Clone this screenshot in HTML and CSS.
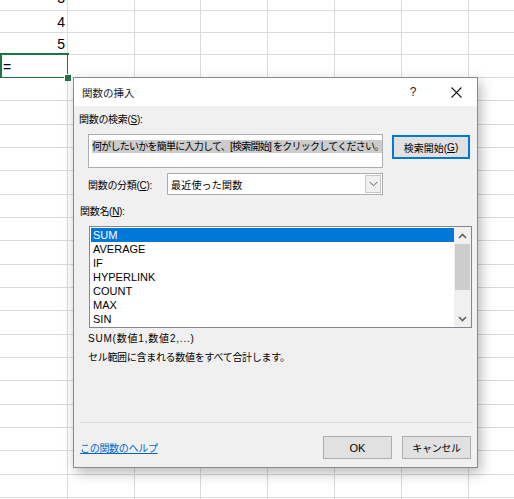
FILE: index.html
```html
<!DOCTYPE html>
<html lang="ja">
<head>
<meta charset="utf-8">
<title>関数の挿入</title>
<link rel="stylesheet" href="styles.css">
</head>
<body>
<div class="sheet">
  <div class="num num-top">3</div><div></div><div></div><div></div><div></div><div></div><div></div><div></div>
  <div class="num">4</div><div></div><div></div><div></div><div></div><div></div><div></div><div></div>
  <div class="num">5</div><div></div><div></div><div></div><div></div><div></div><div></div><div></div>
  <div class="active">=</div><div></div><div></div><div></div><div></div><div></div><div></div><div></div>
  <div></div><div></div><div></div><div></div><div></div><div></div><div></div><div></div>
  <div></div><div></div><div></div><div></div><div></div><div></div><div></div><div></div>
  <div></div><div></div><div></div><div></div><div></div><div></div><div></div><div></div>
  <div></div><div></div><div></div><div></div><div></div><div></div><div></div><div></div>
  <div></div><div></div><div></div><div></div><div></div><div></div><div></div><div></div>
  <div></div><div></div><div></div><div></div><div></div><div></div><div></div><div></div>
  <div></div><div></div><div></div><div></div><div></div><div></div><div></div><div></div>
  <div></div><div></div><div></div><div></div><div></div><div></div><div></div><div></div>
  <div></div><div></div><div></div><div></div><div></div><div></div><div></div><div></div>
  <div></div><div></div><div></div><div></div><div></div><div></div><div></div><div></div>
  <div></div><div></div><div></div><div></div><div></div><div></div><div></div><div></div>
  <div></div><div></div><div></div><div></div><div></div><div></div><div></div><div></div>
  <div></div><div></div><div></div><div></div><div></div><div></div><div></div><div></div>
  <div></div><div></div><div></div><div></div><div></div><div></div><div></div><div></div>
  <div></div><div></div><div></div><div></div><div></div><div></div><div></div><div></div>
  <div></div><div></div><div></div><div></div><div></div><div></div><div></div><div></div>
  <div></div><div></div><div></div><div></div><div></div><div></div><div></div><div></div>
  <div></div><div></div><div></div><div></div><div></div><div></div><div></div><div></div>
  <div></div><div></div><div></div><div></div><div></div><div></div><div></div><div></div>
</div>

<div class="dialog" role="dialog" aria-label="関数の挿入">
  <div class="titlebar">
    <span class="title">関数の挿入</span>
    <span class="help">?</span>
    <span class="close"><svg width="11" height="11" viewBox="0 0 11 11"><path d="M0.5 0.5 L10.5 10.5 M10.5 0.5 L0.5 10.5" stroke="#1a1a1a" stroke-width="1.1" fill="none"/></svg></span>
  </div>
  <div class="body">
    <div class="label">関数の検索(<u>S</u>):</div>
    <div class="search-row">
      <div class="search-box"><span class="sel">何がしたいかを簡単に入力して、[検索開始] をクリックしてください。</span></div>
      <button class="btn btn-default">検索開始(<u>G</u>)</button>
    </div>
    <div class="cat-row">
      <span class="cat-label">関数の分類(<u>C</u>):</span>
      <div class="combo">
        <span class="combo-text">最近使った関数</span>
        <span class="drop"><svg width="9" height="6" viewBox="0 0 9 6"><polyline points="0.5,0.8 4.5,4.8 8.5,0.8" fill="none" stroke="#606060" stroke-width="1"/></svg></span>
      </div>
    </div>
    <div class="label label-list">関数名(<u>N</u>):</div>
    <div class="listbox">
      <ul class="items">
        <li class="selected">SUM</li>
        <li>AVERAGE</li>
        <li>IF</li>
        <li>HYPERLINK</li>
        <li>COUNT</li>
        <li>MAX</li>
        <li>SIN</li>
      </ul>
      <div class="scrollbar">
        <span class="arrow"><svg width="9" height="6" viewBox="0 0 9 6"><polyline points="1,5 4.5,1.5 8,5" fill="none" stroke="#606060" stroke-width="1.6"/></svg></span>
        <div class="track"><div class="thumb"></div></div>
        <span class="arrow"><svg width="9" height="6" viewBox="0 0 9 6"><polyline points="1,1 4.5,4.5 8,1" fill="none" stroke="#606060" stroke-width="1.6"/></svg></span>
      </div>
    </div>
    <div class="desc">
      <div class="syntax">SUM(数値1,数値2,...)</div>
      <div>セル範囲に含まれる数値をすべて合計します。</div>
    </div>
    <div class="footer">
      <div class="footer-row">
        <a class="help-link" href="#">この関数のヘルプ</a>
        <button class="btn btn-ok">OK</button>
        <button class="btn btn-cancel">キャンセル</button>
      </div>
    </div>
  </div>
</div>
</body>
</html>
```

FILE: styles.css
```css
* { box-sizing: border-box; }

html, body {
  margin: 0;
  padding: 0;
}

body {
  width: 514px;
  height: 499px;
  overflow: hidden;
  position: relative;
  background: #ffffff;
  font-family: "Liberation Sans", Arial, sans-serif;
  color: #000;
}

/* ---------- spreadsheet ---------- */
.sheet {
  display: grid;
  grid-template-columns: 67px 66px 65px 66px 66px 66px 66px 1fr;
  grid-template-rows: 22px 21px 21px 22px repeat(6, 22px 23px 22px) 22px;
  gap: 1px;
  background: #dadada;
  margin-top: -12px;
}

.sheet > div {
  background: #fff;
  font-size: 14px;
  line-height: 1;
  position: relative;
}

.sheet .num {
  display: flex;
  align-items: center;
  justify-content: flex-end;
  padding-right: 2px;
}

.sheet .num-top {
  padding-bottom: 3px;
}

.sheet .active {
  display: flex;
  align-items: center;
  padding-left: 3px;
  padding-top: 1px;
}

.sheet .active::after {
  content: "";
  position: absolute;
  top: -2px;
  left: 0;
  right: -2px;
  bottom: -2px;
  border: 2px solid #217346;
}

.sheet .active::before {
  content: "";
  position: absolute;
  right: -4px;
  bottom: -4px;
  width: 6px;
  height: 6px;
  background: #217346;
  border-left: 1px solid #fff;
  border-top: 1px solid #fff;
  z-index: 1;
}

/* ---------- dialog ---------- */
.dialog {
  position: absolute;
  left: 73px;
  top: 77px;
  width: 405px;
  height: 391px;
  border: 1px solid #8a8a8a;
  background: #f0f0f0;
  box-shadow: 3px 5px 12px rgba(0, 0, 0, 0.28);
  display: flex;
  flex-direction: column;
  font-family: "Liberation Sans", "Noto Sans CJK JP", sans-serif;
  font-size: 10px;
  letter-spacing: -0.3px;
  color: #000;
}

.titlebar {
  height: 28px;
  background: #fff;
  display: flex;
  align-items: center;
}

.title {
  flex: 1;
  padding-left: 8px;
  font-size: 10.5px;
  letter-spacing: 0;
  color: #1a1a1a;
}

.help {
  width: 44px;
  text-align: center;
  font-size: 12px;
  letter-spacing: 0;
  color: #1a1a1a;
}

.close {
  width: 42px;
  display: flex;
  justify-content: center;
  align-items: center;
}

.body {
  flex: 1;
  display: flex;
  flex-direction: column;
  padding: 7px 5px 8px 5px;
}

.label {
  line-height: 14px;
  height: 14px;
  white-space: nowrap;
}

.search-row {
  display: flex;
  align-items: flex-start;
  margin-top: 7px;
  margin-left: 9px;
}

.search-box {
  width: 295px;
  height: 34px;
  background: #fff;
  border: 1px solid #abadb3;
  padding: 5px 3px;
  line-height: 13px;
  white-space: nowrap;
  overflow: hidden;
}

.sel {
  background: #cccccc;
  display: inline-block;
  height: 13px;
  letter-spacing: -0.75px;
}

.btn {
  font: inherit;
  letter-spacing: inherit;
  color: #000;
  background: #e1e1e1;
  border: 1px solid #adadad;
  padding: 0;
  margin: 0;
  height: 23px;
  display: flex;
  align-items: center;
  justify-content: center;
}

.btn-default {
  margin-left: 9px;
  margin-top: 1px;
  width: 78px;
  height: 24px;
  border-color: #0078d7;
  box-shadow: inset 0 0 0 1px #0078d7;
  letter-spacing: 0;
}

.cat-row {
  display: flex;
  align-items: center;
  margin-top: 5px;
  margin-left: 9px;
}

.cat-label {
  width: 79px;
  white-space: nowrap;
}

.combo {
  width: 216px;
  height: 22px;
  background: #fff;
  border: 1px solid #abadb3;
  display: flex;
  align-items: stretch;
}

.combo-text {
  flex: 1;
  padding-left: 3px;
  display: flex;
  align-items: center;
  letter-spacing: 0.2px;
}

.drop {
  width: 16px;
  margin: 1px;
  background: #f0f0f0;
  border: 1px solid #c6c6c6;
  display: flex;
  align-items: center;
  justify-content: center;
}

.label-list {
  margin-top: 10px;
  margin-left: 1px;
}

.listbox {
  margin-top: 7px;
  margin-left: 10px;
  height: 102px;
  background: #fff;
  border: 1px solid #828790;
  display: flex;
}

.items {
  flex: 1;
  list-style: none;
  margin: 0;
  padding: 1px 0 0 1px;
  font-family: "Liberation Sans", Arial, sans-serif;
  font-size: 11px;
  letter-spacing: 0;
}

.items li {
  height: 14px;
  line-height: 14px;
  padding-left: 2px;
}

.items li.selected {
  background: #0078d7;
  color: #fff;
}

.scrollbar {
  width: 17px;
  background: #f0f0f0;
  display: flex;
  flex-direction: column;
}

.arrow {
  height: 17px;
  display: flex;
  align-items: center;
  justify-content: center;
}

.track {
  flex: 1;
  padding: 0 1px;
}

.thumb {
  height: 46px;
  background: #cdcdcd;
}

.desc {
  margin-top: 1px;
  margin-left: 9px;
  line-height: 19px;
}

.syntax {
  letter-spacing: 0.8px;
}

.footer {
  margin-top: auto;
  border-top: 1px solid #dcdcdc;
  margin-left: 1px;
}

.footer-row {
  display: flex;
  align-items: center;
  margin-top: 13px;
}

.help-link {
  color: #0066cc;
  text-decoration: underline;
  flex: 1;
}

.btn-ok,
.btn-cancel {
  width: 69px;
}

.btn-ok {
  font-size: 11px;
  letter-spacing: 0;
}

.btn-cancel {
  margin-left: 10px;
  margin-right: 1px;
}
```
